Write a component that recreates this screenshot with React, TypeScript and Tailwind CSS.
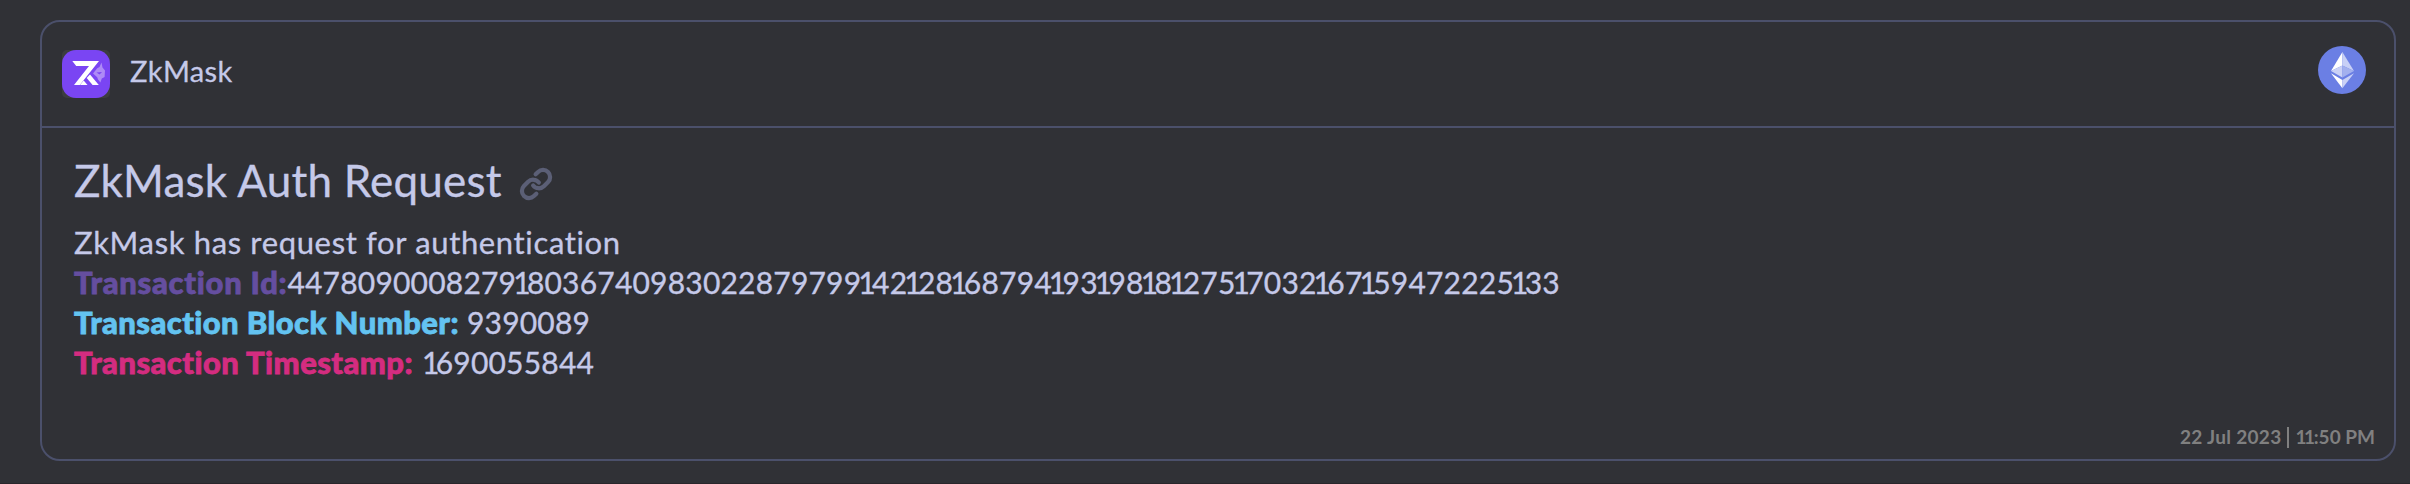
import { Link } from 'lucide-react';

function Digits({ value }: { value: string }) {
  return (
    <span className="text-[30px] tracking-[0.2px] [-webkit-text-stroke:0.35px_currentColor]">
      {value.split(/(1)/).map((part, i) =>
        part === '1' ? (
          <span key={i} className="-ml-[3px] tracking-[-3.7px]">
            1
          </span>
        ) : (
          part
        ),
      )}
    </span>
  );
}

function ZkLogo() {
  return (
    <svg className="size-12" viewBox="0 0 48 48">
      <rect width="48" height="48" rx="5" fill="#3c3d3f" />
      <rect width="48" height="48" rx="14" fill="#7a45f3" />
      <path d="M10.3 11H37L17.8 35H12L27 16H14.2Z" fill="#fff" />
      <path d="M18 35L21.7 30.5L25.5 35Z" fill="#fff" />
      <path d="M24.7 28L28 24.5L36.8 35H30.6Z" fill="#fff" />
      <path
        d="M39.5 12.5L40.5 17.5L43 20.5L42.6 27L39.8 28.5L38.4 32.5L36 29.5L35.2 27.2L31 23.5L35.2 18.2L37.5 17ZM34.5 22.5L37.5 24.5L40 22Z"
        fill="#ae8bf6"
        fillRule="evenodd"
      />
    </svg>
  );
}

function EthLogo() {
  return (
    <svg className="size-12" viewBox="0 0 48 48">
      <circle cx="24" cy="24" r="24" fill="#6b7fe4" />
      <path d="M24.4 6L13 25L24.4 19.6Z" fill="#fff" />
      <path d="M24.4 6L36 25L24.4 19.6Z" fill="#c8d0f6" />
      <path d="M24.4 19.4L13 25L24.4 31.6Z" fill="#cad1f6" />
      <path d="M24.4 19.4L36 25L24.4 31.6Z" fill="#a3b0ee" />
      <path d="M13 27.3L24.4 34V42.2Z" fill="#fff" />
      <path d="M36 27.3L24.4 34V42.2Z" fill="#cad1f6" />
    </svg>
  );
}

const label = "font-black text-[31px] [-webkit-text-stroke:0.8px_currentColor]";

export default function App() {
  return (
    <main className="h-[484px] w-[2410px] border-b border-[#29262b] bg-[#303136] pt-5 pl-10 font-['Lato',sans-serif] text-[#c5c9e9]">
      <section className="flex h-[441px] w-[2356px] flex-col rounded-[20px] border-2 border-[#4b506b]">
        <header className="flex h-[106px] shrink-0 items-center justify-between border-b-2 border-[#4b506b] pr-7 pl-5">
          <div className="flex items-center">
            <ZkLogo />
            <span className="mb-1.5 ml-5 text-[29px] leading-10 tracking-[0.4px] whitespace-nowrap [-webkit-text-stroke:0.3px_currentColor]">
              ZkMask
            </span>
          </div>
          <div className="mb-2">
            <EthLogo />
          </div>
        </header>
        <div className="px-8 pt-[27px] whitespace-nowrap">
          <div className="flex items-center">
            <h1 className="text-[44px] leading-[50px] tracking-[0.2px] [-webkit-text-stroke:0.3px_currentColor]">
              ZkMask Auth Request
            </h1>
            <Link className="mt-2 ml-[17px] size-[34px] text-[#5b5f76]" strokeWidth={3} />
          </div>
          <div className="mt-[17px] leading-10">
            <p className="h-10 text-[31px] tracking-[0.65px] [-webkit-text-stroke:0.3px_currentColor]">
              ZkMask has request for authentication
            </p>
            <p className="h-10">
              <b className={`${label} tracking-[0.72px] text-[#654ea0]`}>Transaction Id:</b>
              <Digits value="44780900082791803674098302287979914212816879419319818127517032167159472225133" />
            </p>
            <p className="h-10">
              <b className={`${label} mr-2 tracking-[0.41px] text-[#63c3f1]`}>Transaction Block Number:</b>
              <Digits value="9390089" />
            </p>
            <p className="h-10">
              <b className={`${label} mr-3 tracking-[0.43px] text-[#d42c80]`}>Transaction Timestamp:</b>
              <Digits value="1690055844" />
            </p>
          </div>
        </div>
        <footer className="mt-auto flex items-center justify-end pr-[19px] pb-2 text-[19px] leading-7 font-bold text-[#808080]">
          <span className="tracking-[0.3px]">22 Jul 2023</span>
          <span className="mr-1.5 ml-1.5 h-[21px] w-0.5 bg-[#808080]" />
          <span>
            <span className="tracking-[-2.4px]">11</span>
            <span className="ml-px">:50 PM</span>
          </span>
        </footer>
      </section>
    </main>
  );
}
